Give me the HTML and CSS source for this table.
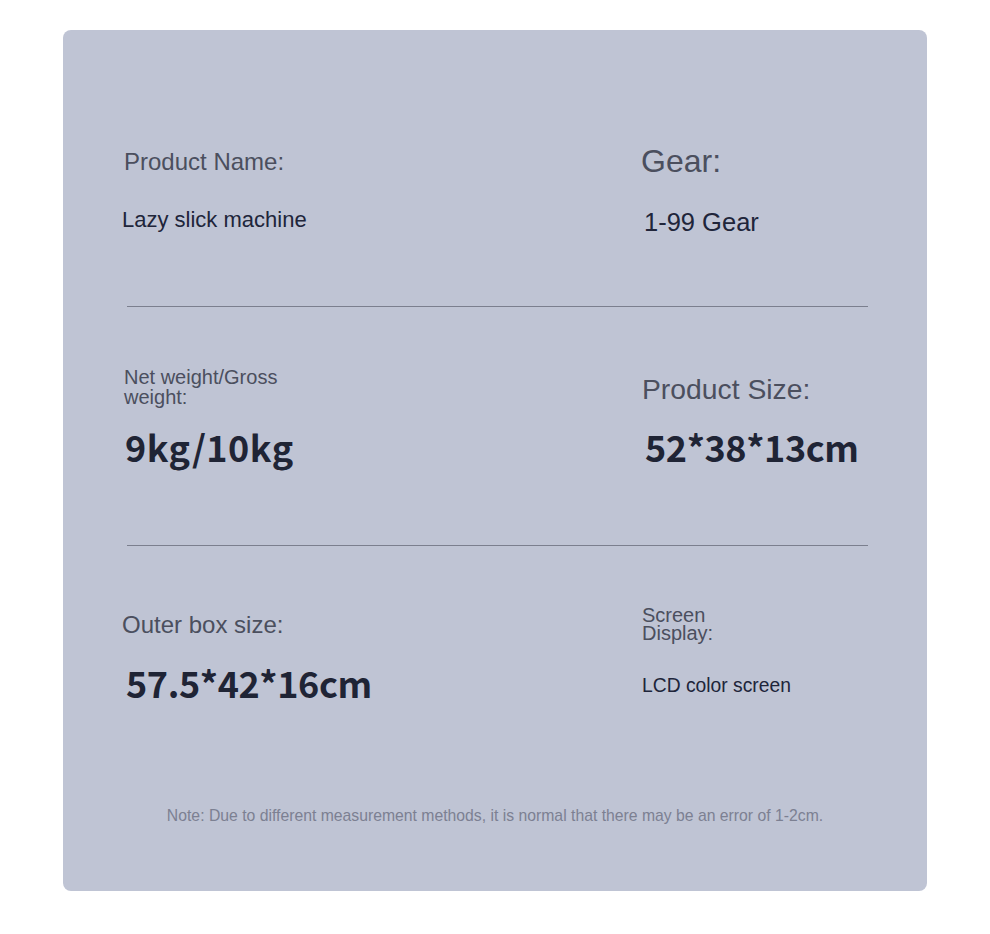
FILE: index.html
```html
<!DOCTYPE html>
<html lang="en">
<head>
<meta charset="utf-8">
<title>Product specs</title>
<link rel="stylesheet" href="styles.css">
</head>
<body>
<div class="card">
  <section class="row row1">
    <div class="cell c-left">
      <div class="lbl l-name">Product Name:</div>
      <div class="val v-name">Lazy slick machine</div>
    </div>
    <div class="cell c-right">
      <div class="lbl l-gear">Gear:</div>
      <div class="val v-gear">1-99 Gear</div>
    </div>
  </section>
  <hr class="divider">
  <section class="row row2">
    <div class="cell c-left">
      <div class="lbl l-weight">Net weight/Gross weight:</div>
      <div class="big v-weight">9kg/10kg</div>
    </div>
    <div class="cell c-right">
      <div class="lbl l-size">Product Size:</div>
      <div class="big v-size">52*38*13cm</div>
    </div>
  </section>
  <hr class="divider">
  <section class="row row3">
    <div class="cell c-left">
      <div class="lbl l-box">Outer box size:</div>
      <div class="big v-box">57.5*42*16cm</div>
    </div>
    <div class="cell c-right">
      <div class="lbl l-screen">Screen Display:</div>
      <div class="val v-screen">LCD color screen</div>
    </div>
  </section>
  <p class="note">Note: Due to different measurement methods, it is normal that there may be an error of 1-2cm.</p>
</div>
</body>
</html>
```
FILE: styles.css
```css
html, body {
  margin: 0;
  padding: 0;
  background: #ffffff;
}
body {
  font-family: "Liberation Sans", Arial, sans-serif;
  padding: 30px 0 0 63px;
}
.card {
  width: 864px;
  height: 861px;
  background: #bfc4d4;
  border-radius: 8px;
  display: flex;
  flex-direction: column;
  box-sizing: border-box;
}
.row {
  display: grid;
  grid-template-columns: 519px 1fr;
  padding-left: 59px;
  box-sizing: border-box;
}
.row1 { height: 276px; padding-top: 113px; }
.row2 { height: 238px; padding-top: 60px; }
.row3 { height: 259px; padding-top: 60px; }
.cell {
  display: flex;
  flex-direction: column;
  align-items: flex-start;
}
.divider {
  margin: 0 0 0 64px;
  width: 741px;
  height: 1px;
  border: 0;
  background: #7b7f8e;
}
.lbl { color: #4b4f5e; }
.val { color: #20253a; }
.big {
  color: #1f2435;
  font-family: "Noto Sans CJK SC", "Noto Sans", sans-serif;
  font-weight: 700;
  font-size: 36px;
  line-height: 48px;
}

/* row 1 */
.l-name { font-size: 24px; line-height: 28px; margin: 5px 0 0 2px; }
.v-name { font-size: 22px; line-height: 26px; margin-top: 31px; }
.l-gear { font-size: 32px; line-height: 36px; }
.v-gear { font-size: 25.5px; line-height: 30px; margin: 28px 0 0 3px; }

/* row 2 */
.l-weight { font-size: 20px; line-height: 20px; width: 170px; margin-left: 2px; }
.v-weight { margin: 15px 0 0 3px; letter-spacing: 0.5px; }
.c-right .l-size { font-size: 28.3px; line-height: 32px; margin: 6px 0 0 1px; }
.v-size { margin: 17px 0 0 4px; letter-spacing: -0.4px; }

/* row 3 */
.l-box { font-size: 24px; line-height: 28px; margin-top: 5px; }
.v-box { margin: 19px 0 0 4px; letter-spacing: -0.4px; }
.l-screen { font-size: 20px; line-height: 18px; width: 100px; margin-left: 1px; }
.v-screen { font-size: 19.3px; line-height: 24px; margin: 32px 0 0 1px; }

.note {
  margin: 1px 0 0;
  text-align: center;
  color: #7c8092;
  font-size: 15.75px;
  line-height: 20px;
}
```
